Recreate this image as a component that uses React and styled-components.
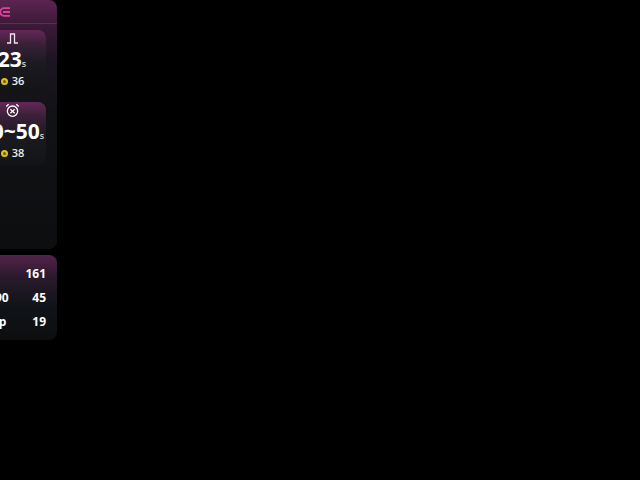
import React from "react";
import styled, { createGlobalStyle } from "styled-components";

const Global = createGlobalStyle`
  html, body { margin: 0; background: #000; overflow: hidden; }
  body { font-family: "Open Sans", "Liberation Sans", sans-serif; color: #fff; }
`;
const Column = styled.div`
  width: 89px; margin-left: -32px; display: flex; flex-direction: column; gap: 6px;
`;
const Panel = styled.section`
  border-radius: 8px; overflow: hidden;
  background: linear-gradient(180deg, #5c2450 0px, #3c1a38 24px, #1c1520 60px, #111215 120px, #0d0e10 100%);
`;
const MainPanel = styled(Panel)`height: 249px; box-sizing: border-box;`;
const Header = styled.header`
  height: 24px; box-sizing: border-box; border-bottom: 1px solid #5a3055;
  display: flex; align-items: center; padding-left: 32px;
`;
const Cards = styled.div`
  display: flex; flex-direction: column; gap: 9px; padding: 6px 10px 0;
`;
const Card = styled.article`
  height: 63px; width: 68px; border-radius: 8px; display: flex; flex-direction: column; align-items: center;
  padding-top: 2px; box-sizing: border-box;
  background: linear-gradient(180deg, #642858 0px, #3a2038 14px, #1a1a20 34px, #131416 100%);
`;
const IconSlot = styled.div`
  height: 13px; display: flex; align-items: center; justify-content: center;
`;
const Value = styled.div`
  font-size: 21px; font-weight: 700; line-height: 22px; white-space: nowrap; margin-top: 3px;
  small { font-size: 9px; font-weight: 600; color: #d4d4d4; line-height: 0; }
`;
const Reward = styled.div`
  display: flex; align-items: center; gap: 4px; font-size: 11px; font-weight: 600; line-height: 14px; margin: 4px 0 0 1px; color: #eee;
`;
const Coin = styled.span`
  width: 3px; height: 3px; border-radius: 50%; border: 2px solid #e0c020; background: #6a5a10;
`;
const Rows = styled(Panel)`
  height: 85px; padding: 6px 11px 0 0; box-sizing: border-box; display: flex; flex-direction: column;
  background: linear-gradient(180deg, #55224a 0px, #2a1a2c 22px, #101418 50px, #0d0e10 100%);
`;
const Row = styled.div`
  display: flex; justify-content: space-between; align-items: center; height: 24px; font-size: 12px; font-weight: 700; white-space: nowrap;
`;
const Label = styled.span`
  margin-left: ${(p) => p.$inset}px;
`;

const Logo = () => (
  <svg width="11" height="10" viewBox="0 0 11 10" fill="none" stroke="#e0409a" strokeWidth="1.8">
    <path d="M10 1.2H4a3.8 3.8 0 0 0 0 7.6h6M3 5h7" />
  </svg>
);
const Pulse = () => (
  <svg width="13" height="13" viewBox="0 0 13 13" fill="none" stroke="#f0e4ee" strokeWidth="1.3">
    <path d="M1 11h3.5V2h4v9H12" />
  </svg>
);
const Alarm = () => (
  <svg width="15" height="15" viewBox="0 0 14 14" fill="none" stroke="#fff" strokeWidth="1.2" style={{ flexShrink: 0 }}>
    <circle cx="7" cy="7.6" r="4.8" />
    <path d="M5 5.8l4 3.8M9 5.8l-4 3.8M1.2 3.2 3.4 1.2M12.8 3.2 10.6 1.2" />
  </svg>
);

export default function App() {
  return (
    <>
      <Global />
      <Column>
        <MainPanel>
          <Header><Logo /></Header>
          <Cards>
            <Card>
              <IconSlot><Pulse /></IconSlot>
              <Value>23<small>s</small></Value>
              <Reward><Coin />36</Reward>
            </Card>
            <Card>
              <IconSlot><Alarm /></IconSlot>
              <Value>30~50<small>s</small></Value>
              <Reward><Coin />38</Reward>
            </Card>
          </Cards>
        </MainPanel>
        <Rows>
          <Row><Label $inset={19}></Label><span>161</span></Row>
          <Row><Label $inset={27}>90</Label><span>45</span></Row>
          <Row><Label $inset={17}>Exp</Label><span>19</span></Row>
        </Rows>
      </Column>
    </>
  );
}
